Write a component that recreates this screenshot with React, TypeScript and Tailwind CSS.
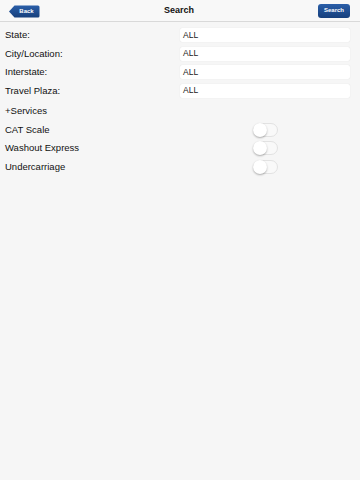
const fields = ["State:", "City/Location:", "Interstate:", "Travel Plaza:"];
const services = ["CAT Scale", "Washout Express", "Undercarriage"];

const Toggle = () => (
  <div className="relative w-[25px] h-[14px] rounded-full border border-[#e2e2e2] bg-[#f9f9f9]">
    <div className="absolute left-[-1px] top-[-1px] w-[14px] h-[14px] rounded-full bg-white shadow-[0_1px_2px_rgba(0,0,0,0.3)]" />
  </div>
);

const App = () => {
  return (
    <div className="w-[360px] h-[480px] bg-[#f6f6f6] font-['Liberation_Sans',Arial,sans-serif] text-[#111]">
      <header className="h-[22px] flex items-center justify-between border-b border-[#d9d9d9] bg-[#f8f8f8] pl-[9px] pr-[10px]">
        <button className="relative w-[31px] h-[13px] mt-[1px] flex items-center justify-center">
          <svg className="absolute inset-0" width="31" height="13" viewBox="0 0 31 13">
            <defs>
              <linearGradient id="bk" x1="0" y1="0" x2="0" y2="1">
                <stop offset="0" stopColor="#2a5ea8" />
                <stop offset="1" stopColor="#163f7c" />
              </linearGradient>
            </defs>
            <path d="M0 6.5 L5.5 0.5 H29 Q30.5 0.5 30.5 2 V11 Q30.5 12.5 29 12.5 H5.5 Z" fill="url(#bk)" />
          </svg>
          <span className="relative pl-[4px] text-[6px] font-bold text-white">Back</span>
        </button>
        <h1 className="text-[9px] font-bold">Search</h1>
        <button className="w-[32px] h-[14px] rounded-[3px] bg-gradient-to-b from-[#2a5ea8] to-[#163f7c] text-[6px] font-bold text-white flex items-center justify-center">
          Search
        </button>
      </header>

      <div className="pt-[4px]">
        {fields.map((f) => (
          <div key={f} className="h-[18.5px] flex items-center justify-between pl-[5px] pr-[10px]">
            <span className="text-[9.5px]">{f}</span>
            <div className="w-[170px] h-[14px] rounded-[2px] bg-white shadow-[0_0_1px_rgba(0,0,0,0.15)] flex items-center pl-[3px] text-[8.5px] text-[#222]">
              ALL
            </div>
          </div>
        ))}
      </div>

      <div className="pt-[2px]">
        <div className="h-[18.5px] flex items-center pl-[5px] text-[9.5px]">+Services</div>
        {services.map((s) => (
          <div key={s} className="h-[18.5px] flex items-center pl-[5px]">
            <span className="w-[248px] text-[9.5px]">{s}</span>
            <Toggle />
          </div>
        ))}
      </div>
    </div>
  );
};

export default App;
